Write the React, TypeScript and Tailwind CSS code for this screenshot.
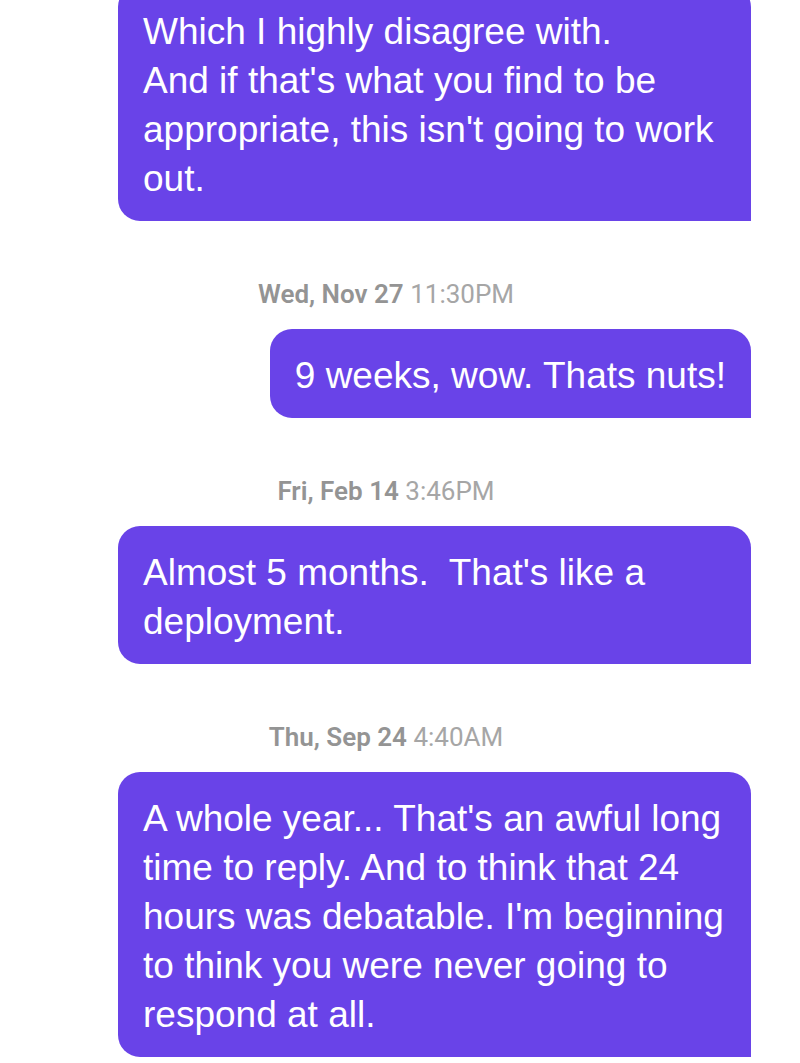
import type { ReactNode } from 'react';

type Item =
  | { kind: 'time'; day: string; time: string }
  | { kind: 'msg'; lines: string[] };

const thread: Item[] = [
  {
    kind: 'msg',
    lines: [
      'Which I highly disagree with.',
      "And if that's what you find to be",
      "appropriate, this isn't going to work",
      'out.',
    ],
  },
  { kind: 'time', day: 'Wed, Nov 27', time: '11:30PM' },
  { kind: 'msg', lines: ['9 weeks, wow. Thats nuts!'] },
  { kind: 'time', day: 'Fri, Feb 14', time: '3:46PM' },
  { kind: 'msg', lines: ["Almost 5 months.\u00a0 That's like a", 'deployment.'] },
  { kind: 'time', day: 'Thu, Sep 24', time: '4:40AM' },
  {
    kind: 'msg',
    lines: [
      "A whole year... That's an awful long",
      'time to reply. And to think that 24',
      "hours was debatable. I'm beginning",
      'to think you were never going to',
      'respond at all.',
    ],
  },
];

// wrapped messages fill the max width, one-liners hug their text
function Bubble({ children, first, wide }: { children: ReactNode; first: boolean; wide: boolean }) {
  return (
    <div
      className={`max-w-[633px] self-end rounded-[22px] rounded-br-none bg-[#6943e8] px-[25px] pt-[22px] pb-[18px] text-[37px] leading-[49px] text-white ${
        wide ? 'w-[633px]' : ''
      } ${first ? '-mt-[15px]' : ''}`}
      style={{ fontFamily: '"Liberation Sans", Arial, sans-serif' }}
    >
      {children}
    </div>
  );
}

function Stamp({ day, time }: { day: string; time: string }) {
  return (
    <div
      className="mt-[58px] mb-5 h-[30px] text-center text-[26px] leading-[30px]"
      style={{ fontFamily: 'Roboto, "Liberation Sans", sans-serif' }}
    >
      <span className="font-semibold text-[#949494]">{day}</span>{' '}
      <span className="text-[#a6a6a6]">{time}</span>
    </div>
  );
}

export default function App() {
  return (
    <div className="h-[1063px] w-[800px] overflow-hidden bg-white">
      <div className="flex flex-col pl-[21px] pr-[49px]">
        {thread.map((item, i) =>
          item.kind === 'time' ? (
            <Stamp key={i} day={item.day} time={item.time} />
          ) : (
            <Bubble key={i} first={i === 0} wide={item.lines.length > 1}>
              {item.lines.map((line, j) => (
                <div key={j} className="whitespace-nowrap">
                  {line}
                </div>
              ))}
            </Bubble>
          )
        )}
      </div>
    </div>
  );
}
